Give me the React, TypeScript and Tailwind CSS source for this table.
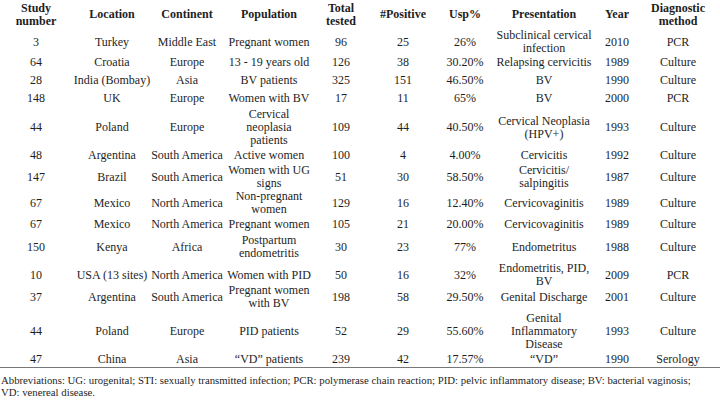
const cols = 'grid grid-cols-[72px_80px_70px_94px_50px_74px_50px_108px_38px_84px]';

type Row = { h: string; cells: React.ReactNode[] };

const rows: Row[] = [
  { h: 'h-[22px]', cells: ['3', 'Turkey', 'Middle East', 'Pregnant women', '96', '25', '26%', <>Subclinical cervical<br />infection</>, '2010', 'PCR'] },
  { h: 'h-[22px]', cells: ['64', 'Croatia', 'Europe', '13 - 19 years old', '126', '38', '30.20%', 'Relapsing cervicitis', '1989', 'Culture'] },
  { h: 'h-[15px]', cells: ['28', 'India (Bombay)', 'Asia', 'BV patients', '325', '151', '46.50%', 'BV', '1990', 'Culture'] },
  { h: 'h-[20px]', cells: ['148', 'UK', 'Europe', 'Women with BV', '17', '11', '65%', 'BV', '2000', 'PCR'] },
  { h: 'h-[38px]', cells: ['44', 'Poland', 'Europe', <>Cervical<br />neoplasia<br />patients</>, '109', '44', '40.50%', <>Cervical Neoplasia<br />(HPV+)</>, '1993', 'Culture'] },
  { h: 'h-[18px]', cells: ['48', 'Argentina', 'South America', 'Active women', '100', '4', '4.00%', 'Cervicitis', '1992', 'Culture'] },
  { h: 'h-[26px]', cells: ['147', 'Brazil', 'South America', <>Women with UG<br />signs</>, '51', '30', '58.50%', <>Cervicitis/<br />salpingitis</>, '1987', 'Culture'] },
  { h: 'h-[26px]', cells: ['67', 'Mexico', 'North America', <>Non-pregnant<br />women</>, '129', '16', '12.40%', 'Cervicovaginitis', '1989', 'Culture'] },
  { h: 'h-[16px]', cells: ['67', 'Mexico', 'North America', 'Pregnant women', '105', '21', '20.00%', 'Cervicovaginitis', '1989', 'Culture'] },
  { h: 'h-[30px]', cells: ['150', 'Kenya', 'Africa', <>Postpartum<br />endometritis</>, '30', '23', '77%', 'Endometritus', '1988', 'Culture'] },
  { h: 'h-[22px]', cells: ['10', 'USA (13 sites)', 'North America', 'Women with PID', '50', '16', '32%', <>Endometritis, PID,<br />BV</>, '2009', 'PCR'] },
  { h: 'h-[26px]', cells: ['37', 'Argentina', 'South America', <>Pregnant women<br />with BV</>, '198', '58', '29.50%', 'Genital Discharge', '2001', 'Culture'] },
  { h: 'h-[42px]', cells: ['44', 'Poland', 'Europe', 'PID patients', '52', '29', '55.60%', <>Genital<br />Inflammatory<br />Disease</>, '1993', 'Culture'] },
  { h: 'h-[14px]', cells: ['47', 'China', 'Asia', '\u201cVD\u201d patients', '239', '42', '17.57%', '\u201cVD\u201d', '1990', 'Serology'] },
];

const headers: React.ReactNode[] = [
  <>Study<br />number</>, 'Location', 'Continent', 'Population', <>Total<br />tested</>,
  '#Positive', 'Usp%', 'Presentation', 'Year', <>Diagnostic<br />method</>,
];

export default function App() {
  return (
    <div className="w-[720px] h-[400px] bg-white text-[#1e1e1e] font-['Liberation_Serif','Times_New_Roman',serif] text-[12px] leading-[13px] overflow-hidden">
      <div className={`${cols} h-[29px] font-bold`}>
        {headers.map((c, i) => (
          <div key={i} className="flex items-center justify-center text-center whitespace-nowrap">{c}</div>
        ))}
      </div>
      {rows.map((r, ri) => (
        <div key={ri} className={`${cols} ${r.h}`}>
          {r.cells.map((c, i) => (
            <div key={i} className="flex items-center justify-center text-center whitespace-nowrap">{c}</div>
          ))}
        </div>
      ))}
      <div className="mt-[1px] border-t-[1.5px] border-[#777]" />
      <div className="pt-[6px] pl-[1px] text-[10.75px] leading-[12px] whitespace-nowrap">
        Abbreviations: UG: urogenital; STI: sexually transmitted infection; PCR: polymerase chain reaction; PID: pelvic inflammatory disease; BV: bacterial vaginosis;
        <br />
        VD: venereal disease.
      </div>
    </div>
  );
}
